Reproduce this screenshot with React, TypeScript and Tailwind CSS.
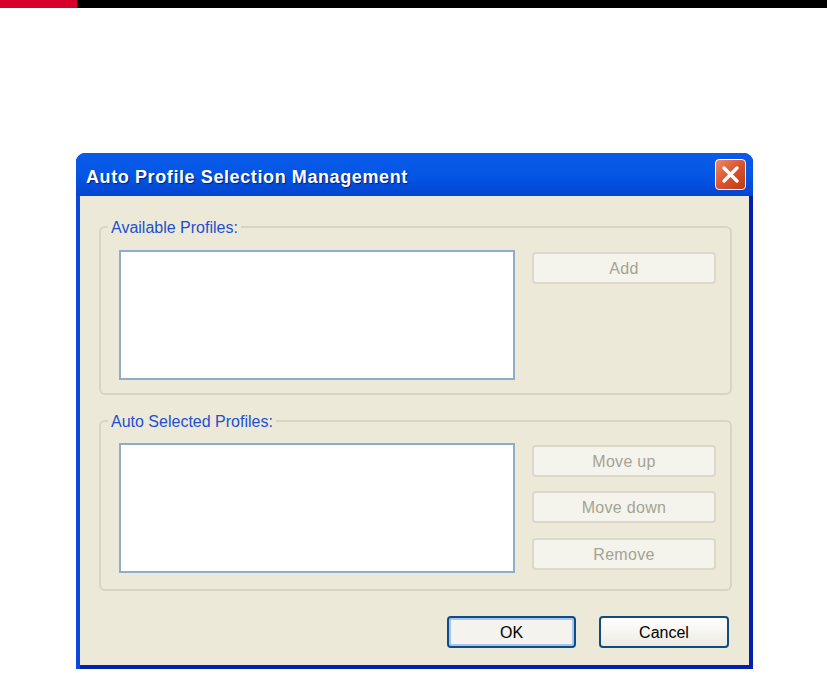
const font = "font-['Liberation_Sans',sans-serif]";

const GhostButton = ({ text, className = "" }: { text: string; className?: string }) => (
  <div className={`flex h-[32px] w-[184px] items-center justify-center rounded-[4px] border-2 border-[#dcd9ca] bg-[#f4f3ec] pt-[1px] text-[16px] tracking-[0.3px] text-[#a4a394] ${className}`}>
    {text}
  </div>
);

const ListBox = () => <div className="h-[130px] w-[396px] border-2 border-[#8facc8] bg-white" />;

const Group = ({ title, height, children }: { title: string; height: string; children: React.ReactNode }) => (
  <div className={`relative ml-[19px] flex w-[633px] gap-[17px] rounded-[6px] border-2 border-[#d8d5c5] pl-[18px] ${height}`}>
    <span className="absolute -top-[10px] left-[7px] bg-[#ece9d8] px-[3px] text-[16px] leading-[20px] text-[#1f50cf]">
      {title}
    </span>
    {children}
  </div>
);

const App = () => {
  return (
    <div className={`h-[673px] w-[827px] overflow-hidden bg-white ${font}`}>
      <div className="flex h-[8px]">
        <div className="w-[77px] bg-[#d7002a]" />
        <div className="flex-1 bg-black" />
      </div>
      <div className="pl-[76px] pt-[145px]">
        <div className="flex h-[516px] w-[677px] flex-col rounded-t-[9px] bg-[#0020b0]">
          <div className="flex h-[43px] items-center justify-between rounded-t-[9px] bg-gradient-to-b from-[#0a5be8] via-[#0456e6] to-[#0345d0] pl-[10px] pr-[7px]">
            <span className="mt-[5px] text-[18px] font-bold tracking-[0.6px] text-white [text-shadow:1px_1px_1px_#0a1f80]">
              Auto Profile Selection Management
            </span>
            <div className="flex h-[31px] w-[31px] items-center justify-center rounded-[4px] border border-white bg-gradient-to-br from-[#ee8a66] via-[#d9532c] to-[#c03a12]">
              <svg width="21" height="21" viewBox="0 0 21 21">
                <path d="M4 4 L17 17 M17 4 L4 17" stroke="#fff" strokeWidth="3.4" strokeLinecap="round" />
              </svg>
            </div>
          </div>
          <div className="flex flex-1">
            <div className="w-[4px] bg-[#0a47dc]" />
            <div className="mb-[4px] mr-[4px] flex-1 bg-[#ece9d8] pt-[30px]">
              <Group title="Available Profiles:" height="h-[169px] pt-[22px]">
                <ListBox />
                <GhostButton text="Add" className="mt-[2px]" />
              </Group>
              <div className="mt-[25px]">
                <Group title="Auto Selected Profiles:" height="h-[171px] pt-[21px]">
                  <ListBox />
                  <div className="mt-[2px] flex flex-col">
                    <GhostButton text="Move up" />
                    <GhostButton text="Move down" className="mt-[14px]" />
                    <GhostButton text="Remove" className="mt-[15px]" />
                  </div>
                </Group>
              </div>
              <div className="mt-[25px] flex justify-end gap-[23px] pr-[20px]">
                <div className="flex h-[32px] w-[129px] items-center justify-center rounded-[4px] border-2 border-[#0f4c7f] bg-[#f4f3ee] pt-[1px] text-[16px] text-black shadow-[inset_0_0_0_2px_#a9c4ee]">
                  OK
                </div>
                <div className="flex h-[32px] w-[130px] items-center justify-center rounded-[4px] border-2 border-[#0f4c7f] bg-gradient-to-b from-white to-[#ecebe2] pt-[1px] text-[16px] text-black">
                  Cancel
                </div>
              </div>
            </div>
          </div>
        </div>
      </div>
    </div>
  );
};

export default App;
